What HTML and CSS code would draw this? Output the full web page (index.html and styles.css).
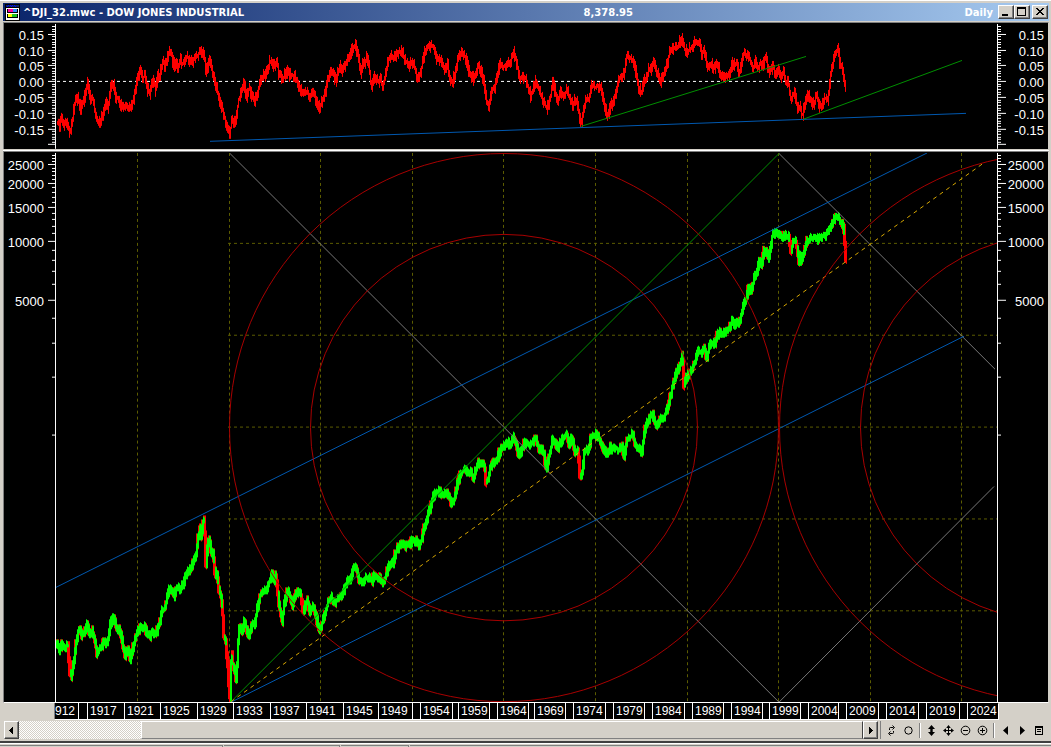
FILE: index.html
```
<!DOCTYPE html>
<html lang="en">
<head>
<meta charset="utf-8">
<title>^DJI_32.mwc - DOW JONES INDUSTRIAL</title>
<link rel="stylesheet" href="styles.css">
</head>
<body>
<main class="window">
  <header class="titlebar">
    <svg class="app-icon" viewBox="0 0 15 17" shape-rendering="crispEdges" aria-hidden="true">
      <rect width="15" height="17" fill="#000"/><rect x="1" y="1" width="13" height="2" fill="#0a246a"/>
      <path d="M3 1h1m1 0h1m1 0h1m1 0h1M2 2h1m3 0h1m3 0h1" stroke="#0000ff"/>
      <rect x="1" y="4" width="13" height="12" fill="#fff"/>
      <rect x="2" y="5" width="11" height="4" fill="#000"/><rect x="2" y="10" width="11" height="4" fill="#000"/>
      <rect x="3" y="5" width="5" height="3" fill="#ff00a0"/><rect x="8" y="5" width="4" height="3" fill="#3090ff"/>
      <rect x="3" y="10" width="4" height="3" fill="#ffff00"/><rect x="7" y="10" width="5" height="3" fill="#20c020"/>
    </svg>
    <h1 class="title">^DJI_32.mwc - DOW JONES INDUSTRIAL</h1>
    <span class="quote">8,378.95</span>
    <span class="period">Daily</span>
    <div class="controls">
      <button class="ctl" type="button" aria-label="Minimize"><svg viewBox="0 0 12 10" shape-rendering="crispEdges"><path d="M2 7h6v2H2z"/></svg></button>
      <button class="ctl" type="button" aria-label="Maximize"><svg viewBox="0 0 12 10" shape-rendering="crispEdges"><path fill-rule="evenodd" d="M1 0h9v9H1zM2 2v6h7V2z"/></svg></button>
      <button class="ctl ctl-close" type="button" aria-label="Close"><svg viewBox="0 0 12 10" shape-rendering="crispEdges"><path d="M2 1h2v1h1v1h2V2h1V1h2v1H9v1H8v1H7v1h1v1h1v1h1v1H8V7H7V6H5v1H4v1H2V7h1V6h1V5h1V4H4V3H3V2H2z"/></svg></button>
    </div>
  </header>

  <section class="panel panel-osc" aria-label="Oscillator">
    <svg class="chart" id="osc" viewBox="4 23 1044 126" preserveAspectRatio="none">
      <path class="zero" d="M57 81.5H845"/>
      <path class="osc-line" id="osc-line"/>
      <path class="blue" d="M210 141.5L966 113.5"/>
      <path class="green" d="M581 126.5L806 56.5M803 119.5L962 60.5"/>
      <g id="osc-axis"></g>
    </svg>
  </section>

  <section class="panel panel-price" aria-label="Price">
    <svg class="chart" id="price" viewBox="4 152 1044 551" preserveAspectRatio="none">
      <defs><clipPath id="plot"><rect x="56" y="153" width="941" height="550"/></clipPath></defs>
      <g clip-path="url(#plot)">
        <path class="grid" d="M137.5 153V703M229.5 153V703M320.5 153V703M412.5 153V703M503.5 153V703M595.5 153V703M687.5 153V703M778.5 153V703M870.5 153V703M961.5 153V703M228 243.5H997M228 335.5H997M228 427.5H997M228 519.5H997M228 611.5H997"/>
        <path class="down" id="down"/>
        <path class="up" id="up"/>
        <path class="gray" d="M230 153.5L779 703M779 153.5L995 369.5M779 703L994 487"/>
        <path class="blue" d="M56 588L927 153M231 703L964 336.5"/>
        <path class="green" d="M231 702.5L779 153.5"/>
        <path class="trend" d="M231 702.5L983 163.5"/>
        <g class="rings"><circle cx="504" cy="428" r="274.5"/><circle cx="504" cy="428" r="193.5"/><circle cx="1054" cy="428" r="274.5"/><circle cx="1054" cy="428" r="193.5"/></g>
      </g>
      <g id="price-axis"></g>
    </svg>
  </section>

  <div class="year-row"><div class="years" id="years"></div></div>

  <footer class="bottom">
    <div class="scrollbar">
      <button class="arrow" type="button" aria-label="Scroll left"><svg viewBox="0 0 8 9" shape-rendering="crispEdges"><path d="M5 1v7H4V7H3V6H2V5H1V4h1V3h1V2h1V1z"/></svg></button>
      <div class="track"><div class="thumb"></div></div>
      <button class="arrow" type="button" aria-label="Scroll right"><svg viewBox="0 0 8 9" shape-rendering="crispEdges"><path d="M2 1v7h1V7h1V6h1V5h1V4H5V3H4V2H3V1z"/></svg></button>
    </div>
    <div class="tools">
      <button class="tool" type="button" aria-label="Refresh"><svg viewBox="0 0 11 11"><path class="ln" d="M7.500 2.500H4.500Q3.500 2.500 3.500 3.500V5M6.500 0.500L8.500 2.500L6.500 4.500M3.500 8.500H6.500Q7.500 8.500 7.500 7.500V6M4.500 6.500L2.500 8.500L4.500 10.500"/></svg></button>
      <button class="tool" type="button" aria-label="Circle"><svg viewBox="0 0 11 11"><circle class="ln" cx="5.500" cy="5.500" r="3.700"/></svg></button>
      <i class="sep"></i>
      <button class="tool" type="button" aria-label="Fit vertically"><svg viewBox="0 0 11 11"><path d="M5.500 0L9 4H6.700V7H9L5.500 11L2 7H4.300V4H2z"/></svg></button>
      <button class="tool" type="button" aria-label="Move"><svg viewBox="0 0 11 11"><path class="ln" d="M5.500 1V10M1 5.500H10"/><path d="M5.500 0L7.800 3H3.200zM5.500 11L7.800 8H3.200zM0 5.500L3 3.200V7.800zM11 5.500L8 3.200V7.800z"/></svg></button>
      <button class="tool" type="button" aria-label="Zoom out"><svg viewBox="0 0 11 11"><circle class="ln" cx="5.500" cy="5.500" r="4.300"/><path class="ln" d="M3 5.500H8"/></svg></button>
      <button class="tool" type="button" aria-label="Zoom in"><svg viewBox="0 0 11 11"><circle class="ln" cx="5.500" cy="5.500" r="4.300"/><path class="ln" d="M3 5.500H8M5.500 3V8"/></svg></button>
      <i class="sep"></i>
      <button class="tool" type="button" aria-label="Previous"><svg viewBox="0 0 11 11"><path d="M8 1V10L3 5.500z"/></svg></button>
      <button class="tool" type="button" aria-label="Next"><svg viewBox="0 0 11 11"><path d="M3 1V10L8 5.500z"/></svg></button>
      <button class="tool" type="button" aria-label="List"><svg viewBox="0 0 11 11" shape-rendering="crispEdges"><path fill-rule="evenodd" d="M1 1h8v9H1zM2 3v6h6V3z"/><path d="M3 4h4v1H3zM3 6h4v1H3z"/></svg></button>
    </div>
  </footer>
  <div class="status"><span class="pane pane-a"></span><span class="pane pane-b"></span><span class="pane pane-c"></span><span class="pane pane-d"></span></div>
</main>
<script src="chart.js"></script>
</body>
</html>
```
FILE: styles.css
```
* { box-sizing: border-box; }
html, body { height: 100%; }
body { margin: 0; background: #d4d0c8; font-family: "Liberation Sans", Arial, sans-serif; overflow: hidden; }
.window { display: flex; flex-direction: column; height: 100vh; border-top: 1px solid #fff; padding-top: 2px; }
.titlebar {
  position: relative; display: flex; align-items: center; flex: none; height: 18px; margin: 0 2px 0 3px; padding: 0 1px 0 2px;
  background: linear-gradient(90deg, #0a246a, #a6caf0); color: #fff;
  font: bold 10px "DejaVu Sans", sans-serif;
}
.app-icon { width: 15px; height: 17px; flex: none; }
.title { margin: 0 0 0 3px; font: bold 10px "DejaVu Sans", sans-serif; white-space: nowrap; }
.quote { position: absolute; left: 55.5%; }
.period { margin-left: auto; margin-right: 5px; }
.controls { display: flex; }
.ctl, .arrow {
  display: grid; place-items: center; padding: 0; background: #d4d0c8;
  border: 1px solid; border-color: #fff #404040 #404040 #fff; border-radius: 0; box-shadow: inset -1px -1px #808080;
}
.ctl { width: 16px; height: 14px; }
.ctl svg { width: 12px; height: 10px; }
.ctl-close { margin-left: 2px; }
.panel { display: flex; margin: 0 2px 0 3px; border-left: 1px solid #808080; border-right: 1px solid #d4d0c8; background: #000; min-height: 0; }
.panel-osc { flex: 126 1 0; border-top: 1px solid #808080; margin-top: 1px; margin-bottom: 1px; }
.panel-price { flex: 551 1 0; margin-top: 1px; border-top: 1px solid #808080; border-bottom: 1px solid #fff; box-shadow: 0 -1px #fff; }
.chart { width: 100%; height: 100%; display: block; }
.chart text { fill: #fff; font: 13px "Liberation Sans", Arial, sans-serif; text-anchor: end; }
.chart path { fill: none; shape-rendering: crispEdges; }
.zero { stroke: #fff; stroke-dasharray: 3 3; }
.osc-line { stroke: #f00; }
.blue { stroke: #0058b0; }
.green { stroke: #009000; }
.gray { stroke: #787878; }
.trend { stroke: #d8a800; stroke-dasharray: 4 4; }
.grid { stroke: #5c5c00; stroke-dasharray: 3 3; }
.rings circle { fill: none; stroke: #a80000; shape-rendering: crispEdges; }
.up { stroke: #0f0; }
.down { stroke: #f00; }
.axis { stroke: #fff; }
.year-row { flex: none; display: flex; padding: 0 53px 0 55px; height: 16px; }
.years { display: grid; flex: 1; background: #000; box-shadow: 0 1px #fff, 1px 1px #fff, -1px 0 #808080; }
.year {
  min-width: 0; height: 16px; padding-left: 2px; color: #fff; border-left: 1px solid #fff;
  font-size: 12px; line-height: 16px; white-space: nowrap;
}
.year-blank { padding: 0; }
.year-cut { border-left: 0; padding: 0; }
.bottom { flex: none; display: flex; height: 22px; padding: 1px 3px 2px 4px; border-bottom: 1px solid #808080; margin-top: 1px; }
.scrollbar { display: flex; flex: 1; height: 18px; }
.arrow { width: 15px; height: 18px; flex: none; }
.arrow svg { width: 8px; height: 9px; }
.track { flex: 1; display: flex; padding-left: 122px; background: repeating-conic-gradient(#fff 0 25%, #d4d0c8 0 50%) 0 0 / 2px 2px; }
.thumb { flex: 1; background: #d4d0c8; border: 1px solid; border-color: #fff #404040 #808080 #fff; }
.tools { display: flex; align-items: center; flex: none; height: 18px; padding-left: 2px; border-left: 1px solid #808080; margin-left: 2px; }
.tool { display: grid; place-items: center; width: 17px; height: 18px; padding: 0; border: 0; background: none; }
.tool svg { width: 11px; height: 11px; }
.ln { fill: none; stroke: #000; }
.sep { width: 2px; height: 15px; margin: 0 2px; border-left: 1px solid #808080; border-right: 1px solid #fff; }
.status { flex: none; display: flex; gap: 1px; height: 4px; margin-top: 1px; border-top: 1px solid #fff; padding-top: 1px; background: #d4d0c8; box-shadow: 0 -2px #404040; }
.pane { border-top: 1px solid #808080; border-right: 1px solid #808080; }
.pane-a { width: 223px; }
.pane-b { width: 116px; }
.pane-c { width: 68px; }
.pane-d { flex: 1; border-right: 0; }
```
FILE: chart.js
```
// Traces are listed in thirds of a pixel, relative to an origin.
function points(ox, oy, list) {
  const out = [];
  for (let i = 0; i < list.length; i += 2) out.push([ox + list[i] / 3, oy + list[i + 1] / 3]);
  return out;
}
let seed = 11;
function rnd() { seed = (seed * 16807) % 2147483647; return seed / 2147483647; }

// One vertical bar per pixel column, following the interpolated trace.
function bars(pts, jitter) {
  const out = [];
  let i = 0, prev = pts[0][1];
  const last = pts[pts.length - 1][0];
  for (let x = Math.ceil(pts[0][0]); x <= last; x++) {
    while (i < pts.length - 2 && pts[i + 1][0] < x) i++;
    const [x0, y0] = pts[i], [x1, y1] = pts[i + 1];
    const y = y0 + (y1 - y0) * Math.min(1, Math.max(0, (x - x0) / (x1 - x0)));
    const lo = Math.min(y, prev) - 1 - rnd() * jitter, hi = Math.max(y, prev) + 1 + rnd() * jitter;
    out.push({ x: x, lo: Math.round(lo), hi: Math.round(hi), slope: y - prev });
    prev = y;
  }
  return out;
}

const osc = [].concat(
  points(0, 0, [171,365,177,385,182,345,190,380,196,360,208,400,215,360,222,310,232,295,240,328,250,300,260,245,268,295,276,295,283,340,292,365,300,360,308,345,315,310,322,325,330,265,338,248,345,300,352,290,362,325,375,318,390,325,398,300,410,240,418,205,427,235,433,225,438,265,447,278,457,235,465,270,471,225,475,240,485,185,493,200,505,155,511,155,518,200,526,185,532,205,538,175,545,195,560,170,572,188,582,175,592,165,601,150,610,165,617,220,626,175,632,200,640,235,650,275,660,315,670,345,680,385,687,408,693,360,700,370,708,350,713,300,722,280,730,250,738,295,745,265,760,305,770,280,780,245,790,220,795,230,807,185,815,190,822,205,828,180,834,220,845,240,852,225,862,215,870,230,880,225,890,245,903,280,915,275,928,290,938,270,948,310,957,325,965,300,975,275,982,235,995,210,1005,245,1018,195,1025,215,1035,195,1049,165]),
  points(350, 0, [3,150,14,135,22,165,30,215,37,185,42,195,48,170,55,200,62,260,72,230,80,245,90,240,97,260,105,220,112,180,122,165,130,175,145,155,155,155,165,185,175,200,180,185,190,195,200,240,212,210,222,155,235,140,248,135,258,180,270,180,282,210,290,185,297,240,305,250,315,210,325,165,335,158,345,175,355,215,370,240,382,195,392,220,400,245,406,300,414,318,425,265,432,270,438,235,447,190,455,205,462,195,473,185,478,195,488,150,497,185,507,235,515,230,525,235,540,290,555,245,563,265,572,290,580,305,588,325,598,300,606,245,614,280,622,305,630,275,640,290,648,270,658,295,665,315,672,300,680,310,685,340,692,375,698,330,706,295,715,295,725,250,733,265,740,255,752,265,760,310,770,350,778,325,790,300,800,255,808,230,820,225,828,170,845,180,855,215,863,260,873,280,880,240,886,240,895,205,900,215,907,185,918,215,930,245,940,220,950,190,957,150,968,145,978,145,987,125,995,115,1003,155,1015,150,1025,140,1035,120,1049,140]),
  points(700, 0, [3,160,12,155,20,205,30,190,40,205,50,190,58,220,68,235,80,230,88,215,97,185,103,200,109,180,115,225,122,190,130,160,140,170,150,185,158,205,165,180,172,210,178,185,185,205,194,170,200,195,207,220,217,195,225,230,235,210,242,240,247,210,255,250,262,240,270,295,282,275,290,330,297,320,305,350,314,300,322,280,332,310,340,315,347,285,355,320,363,320,370,295,382,300,388,235,395,200,405,155,412,145,418,200,425,205,430,245,435,272]));

const price = [].concat(
  points(0, 450, [171,585,176,605,182,585,190,595,198,590,205,590,208,660,213,680,218,655,226,600,233,545,240,545,247,560,254,550,261,520,268,555,277,545,284,570,291,615,300,590,312,582,322,580,330,525,342,500,348,530,360,545,366,570,374,620,383,595,390,630,398,600,410,548,420,535,433,530,441,550,450,560,458,545,467,555,480,515,487,480,495,475,505,425,515,415,521,445,530,410,540,420,550,400,560,365,572,360,580,340,588,315,593,265,600,240,603,260,609,215,613,200,615,260,618,345,622,290,628,265,636,320,640,310,646,380,652,375,657,420,663,445,668,480,672,560,678,580,683,640,687,700,690,750,694,600,698,640,704,660,709,690,713,590,718,520,726,550,733,515,740,540,748,560,757,520,764,525,770,480,780,440,790,420,797,430,805,400,816,375,822,395,829,375,834,440,840,480,846,520,852,465,862,425,870,440,878,470,888,425,900,430,905,440,908,495,915,465,921,455,930,485,940,470,948,500,954,525,960,540,968,515,978,480,985,455,993,440,1003,460,1015,445,1030,430]),
  points(220, 480, [374,325,382,305,390,300,400,265,410,260,416,300,425,310,435,295,447,295,455,305,463,280,472,293,480,298,490,310,498,285,506,260,515,245,518,255,525,225,535,205,548,190,556,200,565,197,580,180,590,188,598,198,605,180,613,140]),
  points(350, 400, [225,385,232,350,240,325,248,295,258,280,268,275,280,290,290,275,297,290,302,312,313,300,322,250,330,225,345,205,355,222,362,215,370,240,378,205,388,190,397,185,404,195,408,250,415,235,420,205,430,190,440,180,450,155,460,140,472,125,480,135,490,110,500,135,507,170,516,145,527,125,538,140,548,125,557,115,567,150,575,150,583,170,589,210,597,170,607,120,617,130,624,150,630,125,640,115,649,100,657,130,665,115,675,155,685,150,690,230,697,215,703,150,715,155,723,110,740,103,750,120,760,145,770,165,780,140,788,150,797,140,805,155,815,135,822,170,830,125,848,100,855,135,862,145,875,160,883,100,893,60,908,45,915,70,923,75,935,55,945,45,955,15,958,0,974,-65,981,-85]),
  points(680, 150, [3,635,8,610,12,705,20,680,33,665,45,635,52,600,62,610,73,590,80,630,88,585,105,580,110,555,120,550,130,550,140,540,150,530,156,512,163,525,177,520,185,490,190,465,197,455,205,415,213,425,222,385,230,365,238,330,243,350,252,300,260,305,265,330,270,295,278,250,288,255,295,245,303,260,312,255,322,265,327,260,333,305,340,270,348,275,353,310,358,340,363,315,367,330,373,300,383,270,395,265,410,268,420,260,435,255,447,235,458,215,470,195,478,205,487,225,494,245,496,320,498,325]));

document.getElementById('osc-line').setAttribute('d',
  bars(osc, 6).map(b => `M${b.x + 0.5} ${b.lo}V${b.hi}`).join(''));

let up = '', down = '';
bars(price, 5).forEach(b => {
  const steep = b.slope > 7, tint = rnd() < 0.3 || b.slope > 2;
  if (steep) down += `M${b.x - 0.5} ${b.lo}V${b.hi}M${b.x + 0.5} ${b.lo + 2}V${b.hi}`;
  else up += `M${b.x - 0.5} ${b.lo}V${b.hi}M${b.x + 0.5} ${b.lo + 1}V${b.hi}`;
  if (tint) down += `M${b.x - 1.5} ${b.lo}V${b.hi - 1}M${b.x + 0.5} ${b.lo}V${b.hi + 1}`;
});
document.getElementById('up').setAttribute('d', up);
document.getElementById('down').setAttribute('d', down);

// Draws both vertical axes of a panel.
function axis(id, top, bottom, ticks) {
  let d = `M55.5 ${top}V${bottom}M997.5 ${top}V${bottom}`, labels = '';
  ticks.forEach(t => {
    const y = Math.round(t.y - 0.5) + 0.5;
    d += t.label || t.major ? `M48 ${y}H55M998 ${y}H1006` : `M52 ${y}H55M998 ${y}H1001`;
    if (t.label) labels += `<text x="44" y="${y + 5.5}">${t.label}</text><text x="1044" y="${y + 5.5}">${t.label}</text>`;
  });
  document.getElementById(id).innerHTML = `<path class="axis" d="${d}"/>${labels}`;
}
const oscTicks = [];
for (let n = -24; n <= 21; n++) {
  const y = 81.7 - n * 15.8 / 6;
  if (y > 24 && y < 149) oscTicks.push({ y: y, major: n % 6 === 0, label: n % 6 === 0 && Math.abs(n) <= 18 ? (n / 120).toFixed(2).replace('-0.00', '0.00') : '' });
}
axis('osc-axis', 24, 149, oscTicks);
const priceTicks = [], named = [5000, 10000, 15000, 20000, 25000];
for (let v = 1000; v <= 28000; v += 1000) {
  priceTicks.push({ y: 241.9 - 193.5 * Math.log10(v / 10000), label: named.includes(v) ? String(v) : '' });
}
axis('price-axis', 153, 703, priceTicks);

const edges = [55,78,87,124,160,197,233,270,306,343,378,412,420,452,458,489,497,528,534,565,573,605,613,644,652,684,692,723,731,762,769,800,808,838,846,878,886,918,926,959,967,998];
const names = ['912','','1917','1921','1925','1929','1933','1937','1941','1945','1949','','1954','','1959','','1964','','1969','','1974','','1979','','1984','','1989','','1994','','1999','','2004','','2009','','2014','','2019','','2024'];
const years = document.getElementById('years');
years.style.gridTemplateColumns = names.map((name, i) => `minmax(0, ${edges[i + 1] - edges[i]}fr)`).join(' ');
names.forEach((name, i) => {
  const cell = document.createElement('span');
  cell.className = !i ? 'year year-cut' : name ? 'year' : 'year year-blank';
  cell.textContent = name;
  years.append(cell);
});
```
